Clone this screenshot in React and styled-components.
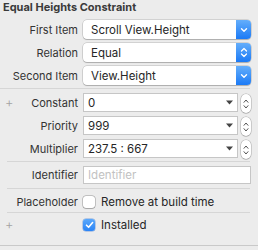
import React from "react";
import styled, { createGlobalStyle } from "styled-components";

const Global = createGlobalStyle`
  html, body { margin: 0; padding: 0; background: #ececec; }
  body { font-family: Inter, "Liberation Sans", sans-serif; -webkit-font-smoothing: antialiased; }
`;

const Panel = styled.div`
  width: 258px;
  height: 246px;
  box-sizing: border-box;
  border-bottom: 1px solid #c9c9c9;
  background: #ececec;
  display: flex;
  flex-direction: column;
`;

const Title = styled.div`
  font-size: 11px;
  font-weight: 700;
  color: #3a3a3a;
  height: 16px;
  line-height: 15px;
  padding-left: 3px;
  margin-bottom: 4px;
`;

const Section = styled.div`
  display: flex;
  flex-direction: column;
  gap: ${(p) => p.gap || 4}px;
`;

const Row = styled.div`
  position: relative;
  display: grid;
  grid-template-columns: 78px 1fr;
  column-gap: 5px;
  align-items: center;
  height: ${(p) => p.h || 19}px;
  padding-right: 7px;
`;

const Label = styled.div`
  font-size: 11px;
  color: #333;
  text-align: right;
  white-space: nowrap;
`;

const Plus = styled.span`
  position: absolute;
  left: 5px;
  top: 50%;
  transform: translateY(-52%);
  font-size: 13px;
  font-weight: 300;
  color: #a3a3a3;
`;

const Separator = styled.div`
  height: 1px;
  background: #d6d6d6;
  margin: ${(p) => p.m || "4px 8px 3px 7px"};
`;

const Popup = styled.div`
  height: 19px;
  box-sizing: border-box;
  background: #fff;
  border-radius: 4px;
  box-shadow: 0 0 0 0.5px rgba(0, 0, 0, 0.22), 0 1px 1px rgba(0, 0, 0, 0.18);
  display: flex;
  align-items: center;
  overflow: hidden;
`;

const PopupText = styled.div`
  flex: 1;
  font-size: 11.5px;
  color: #262626;
  padding-left: 8px;
  white-space: nowrap;
`;

const BlueCap = styled.div`
  width: 15px;
  height: 100%;
  background: linear-gradient(#64aefb, #1b7af6);
  display: flex;
  align-items: center;
  justify-content: center;
`;

const ComboWrap = styled.div`
  display: flex;
  align-items: center;
  gap: 3px;
`;

const Combo = styled.div`
  flex: 1;
  height: 19px;
  box-sizing: border-box;
  background: #fff;
  border: 1px solid #c6c6c6;
  display: flex;
  align-items: center;
  padding: 0 4px 0 4px;
`;

const ComboText = styled.div`
  flex: 1;
  font-size: 11.5px;
  color: #262626;
  white-space: nowrap;
`;

const Stepper = styled.div`
  width: 10px;
  height: 19px;
  box-sizing: border-box;
  border-radius: 5px;
  background: #fff;
  box-shadow: 0 0 0 0.5px rgba(0, 0, 0, 0.25), 0 0.5px 1px rgba(0, 0, 0, 0.2);
  display: flex;
  align-items: center;
  justify-content: center;
  margin-top: 2px;
`;

const TextField = styled.div`
  height: 18px;
  box-sizing: border-box;
  background: #fff;
  border: 1px solid #c6c6c6;
  display: flex;
  align-items: center;
  padding-left: 4px;
  font-size: 11.5px;
  color: #c2c2c2;
`;

const CheckLine = styled.label`
  display: flex;
  align-items: center;
  gap: 6px;
  font-size: 11.5px;
  color: #262626;
`;

const Box = styled.span`
  width: 12px;
  height: 12px;
  box-sizing: border-box;
  border-radius: 3px;
  background: ${(p) => (p.checked ? "linear-gradient(#5aa8fb, #2a84f6)" : "#fff")};
  box-shadow: ${(p) =>
    p.checked
      ? "0 0 0 0.5px rgba(20,90,200,0.5)"
      : "0 0 0 0.5px rgba(0,0,0,0.35), 0 0.5px 1px rgba(0,0,0,0.15)"};
  display: flex;
  align-items: center;
  justify-content: center;
`;

const Chevron = ({ double }) =>
  double ? (
    <svg width="8" height="11" viewBox="0 0 8 11">
      <path d="M1.5 4 L4 1.5 L6.5 4 M1.5 7 L4 9.5 L6.5 7" fill="none" stroke="#fff" strokeWidth="1.3" strokeLinecap="round" strokeLinejoin="round" />
    </svg>
  ) : (
    <svg width="8" height="6" viewBox="0 0 8 6">
      <path d="M1.5 1.8 L4 4.3 L6.5 1.8" fill="none" stroke="#fff" strokeWidth="1.4" strokeLinecap="round" strokeLinejoin="round" />
    </svg>
  );

const StepArrows = () => (
  <svg width="6" height="12" viewBox="0 0 6 12">
    <path d="M1 4.3 L3 2 L5 4.3 M1 7.7 L3 10 L5 7.7" fill="none" stroke="#555" strokeWidth="1" strokeLinecap="round" strokeLinejoin="round" />
  </svg>
);

const Triangle = () => (
  <svg width="7" height="5" viewBox="0 0 7 5">
    <path d="M0 0.5 L7 0.5 L3.5 4.5 Z" fill="#444" />
  </svg>
);

const Check = () => (
  <svg width="9" height="8" viewBox="0 0 9 8">
    <path d="M1.5 4.2 L3.6 6.3 L7.6 1.5" fill="none" stroke="#fff" strokeWidth="1.6" strokeLinecap="round" strokeLinejoin="round" />
  </svg>
);

const PopupField = ({ label, value, double }) => (
  <Row>
    <Label>{label}</Label>
    <Popup>
      <PopupText>{value}</PopupText>
      <BlueCap>
        <Chevron double={double} />
      </BlueCap>
    </Popup>
  </Row>
);

const ComboField = ({ label, value, plus }) => (
  <Row>
    {plus && <Plus>+</Plus>}
    <Label>{label}</Label>
    <ComboWrap>
      <Combo>
        <ComboText>{value}</ComboText>
        <Triangle />
      </Combo>
      <Stepper>
        <StepArrows />
      </Stepper>
    </ComboWrap>
  </Row>
);

export default function App() {
  return (
    <>
      <Global />
      <Panel>
        <Title>Equal Heights Constraint</Title>
        <Section>
          <PopupField label="First Item" value="Scroll View.Height" />
          <PopupField label="Relation" value="Equal" double />
          <PopupField label="Second Item" value="View.Height" />
        </Section>
        <Separator m="3px 8px 3px 0" />
        <Section>
          <ComboField label="Constant" value="0" plus />
          <ComboField label="Priority" value="999" />
          <ComboField label="Multiplier" value="237.5 : 667" />
        </Section>
        <Separator m="4px 8px 4px 7px" />
        <Row h={18}>
          <Label>Identifier</Label>
          <TextField>Identifier</TextField>
        </Row>
        <Separator m="4px 8px 6px 7px" />
        <Row h={12}>
          <Label>Placeholder</Label>
          <CheckLine>
            <Box />
            Remove at build time
          </CheckLine>
        </Row>
        <Separator m="5px 8px 5px 7px" />
        <Row h={12}>
          <Plus>+</Plus>
          <Label></Label>
          <CheckLine>
            <Box checked>
              <Check />
            </Box>
            Installed
          </CheckLine>
        </Row>
      </Panel>
    </>
  );
}
